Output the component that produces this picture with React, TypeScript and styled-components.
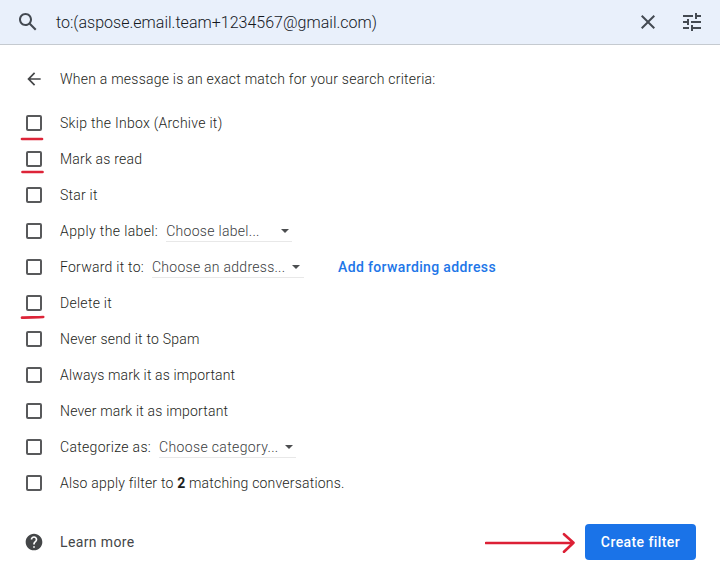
import React from 'react';
import styled, { createGlobalStyle } from 'styled-components';

const GlobalStyle = createGlobalStyle`
  *, *::before, *::after { box-sizing: border-box; }
  body {
    margin: 0;
    background: #fff;
    color: #1c1e20;
    font-family: Roboto, "Liberation Sans", sans-serif;
    font-size: 14px;
    font-weight: 300;
  }
`;

const Page = styled.div`
  width: 720px;
  height: 583px;
  display: flex;
  flex-direction: column;
  background: #fff;
  overflow: hidden;
`;

const SearchBar = styled.header`
  display: flex;
  align-items: center;
  height: 45px;
  padding: 0 16px 1px;
  background: #e9f0fb;
  border-bottom: 1px solid #c5cad0;
  color: #444a52;
`;

const Query = styled.div`
  flex: 1;
  margin-left: 16px;
  padding-top: 2px;
  font-size: 16px;
  line-height: 24px;
  letter-spacing: 0.013px;
  color: #14181e;
  white-space: nowrap;
`;

const Icon = styled.svg<{ $size?: number }>`
  display: block;
  flex: none;
  width: ${p => p.$size ?? 24}px;
  height: ${p => p.$size ?? 24}px;
  fill: currentColor;
`;

const HeaderActions = styled.div`
  display: flex;
  gap: 20px;
`;

const Panel = styled.main`
  padding: 16px 24px 0;
`;

const Row = styled.div<{ $height?: number }>`
  display: flex;
  align-items: center;
  height: ${p => p.$height ?? 36}px;
`;

const Lead = styled.div`
  position: relative;
  display: grid;
  place-items: center;
  width: 20px;
  height: 20px;
  margin-right: 16px;
  flex: none;
  color: #444648;
`;

const CheckBox = styled.button`
  width: 16px;
  height: 16px;
  padding: 0;
  border: 2px solid #58595b;
  border-radius: 2px;
  background: #fff;
`;

const Mark = styled.svg<{ $top: number }>`
  position: absolute;
  left: -4px;
  top: ${p => p.$top}px;
  width: 26px;
  height: 5px;
  overflow: visible;
  fill: none;
  stroke: #dd2438;
  stroke-width: 2.7;
  stroke-linecap: round;
`;

const Label = styled.span<{ $spacing: number; $weight?: number; $color?: string }>`
  font-weight: ${p => p.$weight ?? 300};
  color: ${p => p.$color ?? 'inherit'};
  line-height: 20px;
  letter-spacing: ${p => p.$spacing}px;
  white-space: nowrap;

  b { font-weight: 700; }
`;

const Select = styled.div<{ $width: number; $gap: number; $end: number }>`
  display: flex;
  align-items: center;
  justify-content: space-between;
  width: ${p => p.$width}px;
  height: 19px;
  margin-left: ${p => p.$gap}px;
  padding-right: ${p => p.$end}px;
  color: #3a3c3e;
  box-shadow: 0 1px 0 #e8e8e8;
`;

const Caret = styled.span`
  width: 0;
  height: 0;
  border: 4px solid transparent;
  border-top-color: #4c4e50;
  border-bottom-width: 0;
`;

const ForwardLink = styled.a`
  margin-left: 34px;
  color: #2176e8;
  font-weight: 500;
  line-height: 20px;
  letter-spacing: 0.365px;
  white-space: nowrap;
`;

const Footer = styled.footer`
  display: flex;
  align-items: center;
  height: 36px;
  margin: 23px 0 0;
  padding: 0 24px;
`;

const Arrow = styled.svg`
  width: 90px;
  height: 22px;
  margin-left: auto;
  margin-right: 10px;
  fill: none;
  stroke: #dc2035;
  stroke-width: 2.6;
  stroke-linecap: round;
  stroke-linejoin: round;
`;

const CreateButton = styled.button`
  width: 111px;
  height: 36px;
  padding: 0;
  border: 0;
  border-radius: 4px;
  background: #1a73e8;
  color: #fff;
  font: 500 14px/20px Roboto, sans-serif;
  letter-spacing: 0.42px;
`;

type Choice = { text: string; width: number; gap: number; spacing: number; end: number };
type Option = {
  label: React.ReactNode;
  spacing: number;
  mark?: { top: number; d: string };
  choice?: Choice;
  link?: string;
};

const options: Option[] = [
  { label: 'Skip the Inbox (Archive it)', spacing: 0.284, mark: { top: 24, d: 'M2 2h20' } },
  { label: 'Mark as read', spacing: 0.2, mark: { top: 21, d: 'M2.5 2h20' } },
  { label: 'Star it', spacing: 0.22 },
  { label: 'Apply the label:', spacing: 0.38, choice: { text: 'Choose label...', width: 126, gap: 8, spacing: 0.295, end: 3 } },
  {
    label: 'Forward it to:', spacing: 0.25,
    choice: { text: 'Choose an address...', width: 152, gap: 8, spacing: 0.27, end: 4 },
    link: 'Add forwarding address',
  },
  { label: 'Delete it', spacing: 0.27, mark: { top: 22, d: 'M2 2.6C8 2.2 18 2.5 23.2 2' } },
  { label: 'Never send it to Spam', spacing: 0.22 },
  { label: 'Always mark it as important', spacing: 0.14 },
  { label: 'Never mark it as important', spacing: 0.18 },
  { label: 'Categorize as:', spacing: 0.31, choice: { text: 'Choose category...', width: 137, gap: 8, spacing: 0.353, end: 3 } },
  { label: <>Also apply filter to <b>2</b> matching conversations.</>, spacing: 0.2 },
];

function OptionRow({ label, spacing, mark, choice, link }: Option) {
  return (
    <Row>
      <Lead>
        <CheckBox role="checkbox" aria-checked={false} />
        {mark && <Mark $top={mark.top} viewBox="0 0 26 5"><path d={mark.d} /></Mark>}
      </Lead>
      <Label $spacing={spacing}>{label}</Label>
      {choice && (
        <Select $width={choice.width} $gap={choice.gap} $end={choice.end}>
          <Label $spacing={choice.spacing}>{choice.text}</Label>
          <Caret />
        </Select>
      )}
      {link && <ForwardLink>{link}</ForwardLink>}
    </Row>
  );
}

export default function App() {
  return (
    <Page>
      <GlobalStyle />
      <SearchBar>
        <Icon viewBox="0 0 24 24">
          <path d="M20.49 19l-5.73-5.73C15.53 12.2 16 10.91 16 9.5 16 5.91 13.09 3 9.5 3S3 5.91 3 9.5 5.91 16 9.5 16c1.41 0 2.7-.47 3.77-1.24L19 20.49 20.49 19zM5 9.5C5 7.01 7.01 5 9.5 5S14 7.01 14 9.5 11.99 14 9.5 14 5 11.99 5 9.5z" />
        </Icon>
        <Query>to:(aspose.email.team+1234567@gmail.com)</Query>
        <HeaderActions>
          <Icon viewBox="0 0 24 24">
            <path d="M19 6.41L17.59 5 12 10.59 6.41 5 5 6.41 10.59 12 5 17.59 6.41 19 12 13.41 17.59 19 19 17.59 13.41 12z" />
          </Icon>
          <Icon viewBox="0 0 24 24">
            <path d="M3 17v2h6v-2H3zM3 5v2h10V5H3zm10 16v-2h8v-2h-8v-2h-2v6h2zM7 9v2H3v2h4v2h2V9H7zm14 4v-2H11v2h10zm-6-4h2V7h4V5h-4V3h-2v6z" />
          </Icon>
        </HeaderActions>
      </SearchBar>
      <Panel>
        <Row>
          <Lead>
            <Icon $size={20} viewBox="0 0 24 24">
              <path d="M20 11H7.83l5.59-5.59L12 4l-8 8 8 8 1.41-1.41L7.83 13H20v-2z" />
            </Icon>
          </Lead>
          <Label $spacing={0.238}>When a message is an exact match for your search criteria:</Label>
        </Row>
        <Row $height={8} />
        {options.map((option, i) => <OptionRow key={i} {...option} />)}
      </Panel>
      <Footer>
        <Lead>
          <Icon $size={20} viewBox="0 0 24 24">
            <path d="M12 2C6.48 2 2 6.48 2 12s4.48 10 10 10 10-4.48 10-10S17.52 2 12 2zm1 17h-2v-2h2v2zm2.07-7.75l-.9.92C13.45 12.9 13 13.5 13 15h-2v-.5c0-1.1.45-2.1 1.17-2.83l1.24-1.26c.37-.36.59-.86.59-1.41 0-1.1-.9-2-2-2s-2 .9-2 2H8c0-2.21 1.79-4 4-4s4 1.79 4 4c0 .88-.36 1.68-.93 2.25z" />
          </Icon>
        </Lead>
        <Label $spacing={0.38} $weight={400} $color="#444648">Learn more</Label>
        <Arrow viewBox="0 0 90 22"><path d="M1 12h87M79 3.2l9.5 8.5L79 20.8" /></Arrow>
        <CreateButton>Create filter</CreateButton>
      </Footer>
    </Page>
  );
}
